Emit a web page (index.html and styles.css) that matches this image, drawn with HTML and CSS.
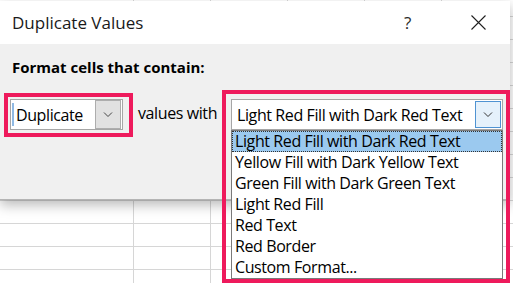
FILE: index.html
```html
<!DOCTYPE html>
<html lang="en">
  <head>
    <meta charset="UTF-8" />
    <meta name="viewport" content="width=device-width, initial-scale=1.0" />
    <title>Duplicate Values</title>
    <link rel="stylesheet" href="styles.css">
  </head>
  <body>
    <section class="dialog">
      <header class="titlebar">
        <span class="title">Duplicate Values</span>
        <span class="help">?</span>
        <svg class="close" width="15" height="15" viewBox="0 0 15 15">
          <path d="M0.5 0.5 L14.5 14.5 M14.5 0.5 L0.5 14.5" stroke="#1f1f1f" stroke-width="1.1" fill="none"/>
        </svg>
      </header>
      <div class="content">
        <p class="label">Format cells that contain:</p>
        <div class="row">
          <div class="mark mark-type">
            <div class="combo combo-type">
              <span class="caret"></span>
              <span class="combo-text">Duplicate</span>
              <span class="drop drop-gray">
                <svg width="10" height="6" viewBox="0 0 10 6"><path d="M1 0.5 L5 4.5 L9 0.5" stroke="#444" fill="none"/></svg>
              </span>
            </div>
          </div>
          <span class="between">values with</span>
          <div class="mark mark-format">
            <div class="combo combo-format">
              <span class="combo-text">Light Red Fill with Dark Red Text</span>
              <span class="drop drop-blue">
                <svg width="10" height="6" viewBox="0 0 10 6"><path d="M1 0.5 L5 4.5 L9 0.5" stroke="#333" fill="none"/></svg>
              </span>
            </div>
            <ul class="list">
              <li class="option selected">Light Red Fill with Dark Red Text</li>
              <li class="option">Yellow Fill with Dark Yellow Text</li>
              <li class="option">Green Fill with Dark Green Text</li>
              <li class="option">Light Red Fill</li>
              <li class="option">Red Text</li>
              <li class="option">Red Border</li>
              <li class="option">Custom Format...</li>
            </ul>
          </div>
        </div>
      </div>
    </section>
  </body>
</html>
```

FILE: styles.css
```css
*,
*::after,
*::before {
  box-sizing: border-box;
}

body {
  margin: 0;
  width: 513px;
  height: 283px;
  overflow: hidden;
  font-family: "Open Sans", "Noto Sans", sans-serif;
  font-size: 16px;
  letter-spacing: -0.4px;
  color: #000;
  /* hoja de calculo detras del dialogo: filas, bloque blanco de la primera columna, columnas */
  background-color: #fff;
  background-image:
    linear-gradient(to bottom, #d6d6d6 1px, transparent 1px),
    linear-gradient(#fff, #fff),
    linear-gradient(to right, #d6d6d6 1px, transparent 1px);
  background-size: 77px 23px, 133px 100%, 77px 23px;
  background-position: 133px 200px, 0 0, 133px 200px;
  background-repeat: repeat, no-repeat, repeat;
}

.dialog {
  margin-top: 1px;
  width: 510px;
  height: 199px;
  background-color: #f0f0f0;
  border-bottom: 1px solid #b4b4b4;
  box-shadow: 0 5px 12px rgba(0, 0, 0, 0.28);
}

.titlebar {
  height: 43px;
  background-color: #fff;
  display: flex;
  align-items: center;
  padding-left: 12px;
}

.title {
  font-size: 17px;
  letter-spacing: 0;
  color: #1a1a1a;
}

.help {
  margin-left: auto;
  font-size: 17px;
  color: #2b2b2b;
}

.close {
  margin-left: 60px;
  margin-right: 24px;
}

.content {
  padding-left: 4px;
}

.label {
  margin: 13px 0 13px 8px;
  font-weight: 700;
  font-size: 15px;
  letter-spacing: 0;
  line-height: 20px;
}

.row {
  display: flex;
  align-items: flex-start;
}

/* recuadros rojos de anotacion */
.mark {
  border: 4px solid #ee1a5c;
}

.mark-type {
  margin-top: 3px;
  padding: 2px 6px 3px 2px;
}

.mark-format {
  padding: 5px 3px 0 5px;
}

.between {
  width: 89px;
  margin-top: 13px;
  padding-left: 5px;
  line-height: 20px;
}

.combo {
  height: 31px;
  display: flex;
  align-items: center;
  background-color: #fff;
  border: 1px solid #a6a6a6;
}

.combo-type {
  width: 113px;
  padding-right: 1px;
}

.combo-format {
  width: 272px;
  padding: 0 1px 0 5px;
}

.caret {
  width: 2px;
  height: 23px;
  margin-left: 1px;
  margin-right: 2px;
  background-color: #8fb9e3;
}

.combo-text {
  flex: 1;
  line-height: 20px;
}

.drop {
  display: flex;
  align-items: center;
  justify-content: center;
  width: 26px;
}

.drop-gray {
  height: 29px;
  background-color: #e1e1e1;
  border: 1px solid #adadad;
}

.drop-blue {
  height: 27px;
  background-color: #e5f1fb;
  border: 1px solid #4f93d2;
}

.list {
  margin: 0;
  padding: 0;
  list-style: none;
  width: 272px;
  background-color: #fff;
  border: 1px solid #7a7a7a;
}

.option {
  height: 21px;
  line-height: 21px;
  padding-left: 3px;
  white-space: nowrap;
}

.selected {
  background-color: #9bc9ef;
  outline: 1px dotted #333;
  outline-offset: -1px;
}
```
